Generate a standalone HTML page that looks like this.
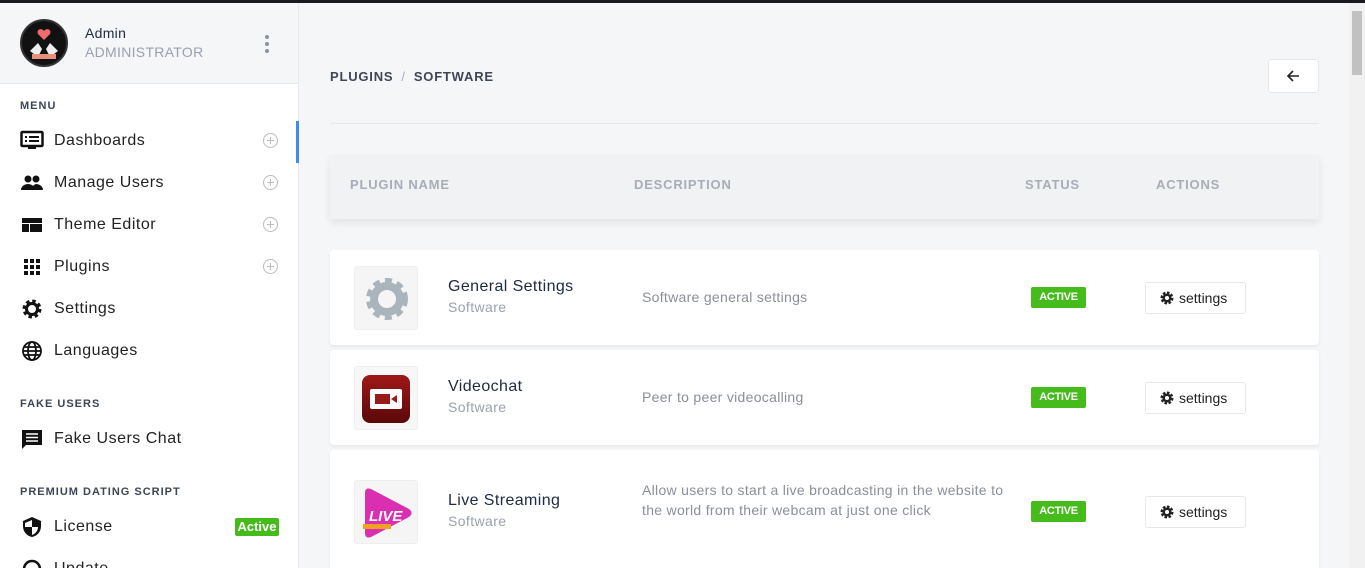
<!DOCTYPE html>
<html><head><style>
*{box-sizing:border-box;margin:0;padding:0}
html{width:1365px;height:568px;overflow:hidden}
body{width:1365px;height:568px;overflow:hidden;font-family:"Liberation Sans",sans-serif;background:#f5f6f8;position:relative}
.top{position:absolute;left:0;top:0;width:1365px;height:3px;background:#1a1a1e}
.side{position:absolute;left:0;top:3px;width:299px;height:565px;background:#fff;border-right:1px solid #e8e9ed;overflow:hidden}
.prof{height:81px;background:#f5f6f8;border-bottom:1px solid #e6e7eb;position:relative}
.av{position:absolute;left:20px;top:16px;width:48px;height:48px;border-radius:50%;background:#111;border:2px solid #333}
.name{position:absolute;left:85px;top:22px;font-size:14px;color:#1d2a44;letter-spacing:.3px}
.role{position:absolute;left:85px;top:41px;font-size:14px;color:#9aa1ae;letter-spacing:.3px}
.dots{position:absolute;left:265px;top:32px;width:4px}
.dots i{display:block;width:4px;height:4px;border-radius:50%;background:#8a92a2;margin-bottom:3px}
.sec{position:absolute;left:20px;font-size:11px;font-weight:bold;letter-spacing:1px;color:#3d4656}
.it{position:absolute;left:20px;width:260px;height:24px;font-size:16px;color:#222;line-height:24px;letter-spacing:.5px}
.it svg{position:absolute;left:0;top:1px}
.it span{position:absolute;left:34px}
.plus{position:absolute;right:2px;top:4px;width:15px;height:15px;border:1.5px solid #bbb;border-radius:50%}
.plus:before{content:"";position:absolute;left:2.5px;top:5.5px;width:7px;height:1.5px;background:#bbb}
.plus:after{content:"";position:absolute;left:5.5px;top:2.5px;width:1.5px;height:7px;background:#bbb}
.ind{position:absolute;left:296px;top:121px;width:3px;height:42px;background:#3d8bf2}
.bc{position:absolute;left:330px;top:69px;font-size:13px;font-weight:bold;color:#3d4656;letter-spacing:.8px}
.bc b{color:#aab;font-weight:normal;margin:0 8px}
.back{position:absolute;left:1268px;top:59px;width:51px;height:34px;background:#fff;border:1px solid #e6e7eb;border-radius:3px}
.hr{position:absolute;left:330px;top:123px;width:989px;height:1px;background:#e6e7eb}
.th{position:absolute;left:330px;top:155px;width:989px;height:64px;background:#f1f2f4;box-shadow:0 4px 8px rgba(0,0,0,.08);font-size:13px;font-weight:bold;color:#a7adb8;letter-spacing:.8px}
.th span{position:absolute;top:22px}
.row{position:absolute;left:330px;width:989px;background:#fff;border-radius:4px;box-shadow:0 2px 3px rgba(0,0,0,.06)}
.ic{position:absolute;left:24px;width:64px;height:64px;border:1px solid #eee;border-radius:3px;background:#f5f5f5;overflow:hidden}
.t1{position:absolute;left:118px;font-size:16px;color:#1d2a44;letter-spacing:.4px}
.t2{position:absolute;left:118px;font-size:14px;color:#9aa1ae;letter-spacing:.4px}
.ds{position:absolute;left:312px;width:365px;font-size:14px;color:#8a8f98;line-height:20px;letter-spacing:.3px}
.act{position:absolute;left:701px;width:55px;height:21px;background:#45bb1c;border-radius:2px;color:#fff;font-size:11px;font-weight:bold;text-align:center;line-height:21px;letter-spacing:-.3px}
.btn{position:absolute;left:815px;width:101px;height:32px;border:1px solid #e6e7eb;border-radius:3px;font-size:14px;color:#222;line-height:30px;padding-left:33px}
.btn svg{position:absolute;left:14px;top:8px}
.sb{position:absolute;left:1349px;top:3px;width:16px;height:565px;background:#f1f1f1}
.sb i{position:absolute;left:3px;top:8px;width:10px;height:64px;background:#c1c1c1}
</style></head><body>
<div class="top"></div>
<div class="side">
 <div class="prof"><div class="av"><svg width="44" height="44" viewBox="0 0 44 44"><path d="M22 10c-3-4-8-1-6 3l6 6 6-6c2-4-3-7-6-3z" fill="#f06b6b"/><path d="M8 30l8-8 4 6-4 8zM36 30l-8-8-4 6 4 8z" fill="#eee"/><rect x="10" y="33" width="24" height="5" fill="#e8907a"/></svg></div>
 <div class="name">Admin</div><div class="role">ADMINISTRATOR</div>
 <div class="dots"><i></i><i></i><i></i></div></div>
 <div class="sec" style="top:97px">MENU</div>
 <div class="it" style="top:126px"><svg width="24" height="22" viewBox="0 0 24 22"><rect x="1.5" y="2" width="21" height="14" rx="1" fill="none" stroke="#111" stroke-width="2.5"/><rect x="8" y="16" width="8" height="3" fill="#111"/><rect x="5" y="6" width="2" height="2" fill="#111"/><rect x="9" y="6" width="10" height="2" fill="#111"/><rect x="5" y="10" width="2" height="2" fill="#111"/><rect x="9" y="10" width="10" height="2" fill="#111"/></svg><span>Dashboards</span><div class="plus"></div></div>
 <div class="it" style="top:168px"><svg width="24" height="22" viewBox="0 0 24 22"><circle cx="8" cy="7" r="3.5" fill="#111"/><circle cx="16" cy="7" r="3.5" fill="#111"/><path d="M1 18c0-4 4-6 7-6s7 2 7 6zM12 18c0-3 1-5 4-6 3 0 7 2 7 6z" fill="#111"/></svg><span>Manage Users</span><div class="plus"></div></div>
 <div class="it" style="top:210px"><svg width="24" height="22" viewBox="0 0 24 22"><rect x="2" y="4" width="20" height="5" fill="#111"/><rect x="2" y="10" width="7" height="8" fill="#111"/><rect x="10" y="10" width="12" height="8" fill="#111"/></svg><span>Theme Editor</span><div class="plus"></div></div>
 <div class="it" style="top:252px"><svg width="24" height="22" viewBox="0 0 24 22"><g fill="#111"><rect x="4" y="3" width="4" height="4"/><rect x="10" y="3" width="4" height="4"/><rect x="16" y="3" width="4" height="4"/><rect x="4" y="9" width="4" height="4"/><rect x="10" y="9" width="4" height="4"/><rect x="16" y="9" width="4" height="4"/><rect x="4" y="15" width="4" height="4"/><rect x="10" y="15" width="4" height="4"/><rect x="16" y="15" width="4" height="4"/></g></svg><span>Plugins</span><div class="plus"></div></div>
 <div class="it" style="top:294px"><svg width="24" height="22" viewBox="0 0 24 22"><circle cx="12" cy="11" r="7" fill="none" stroke="#111" stroke-width="5" stroke-dasharray="3 2.5"/><circle cx="12" cy="11" r="5.5" fill="none" stroke="#111" stroke-width="3"/></svg><span>Settings</span></div>
 <div class="it" style="top:336px"><svg width="24" height="22" viewBox="0 0 24 22"><g fill="none" stroke="#111" stroke-width="1.8"><circle cx="12" cy="11" r="9"/><ellipse cx="12" cy="11" rx="4" ry="9"/><path d="M3 11h18M4 7h16M4 15h16"/></g></svg><span>Languages</span></div>
 <div class="sec" style="top:395px">FAKE USERS</div>
 <div class="it" style="top:424px"><svg width="24" height="22" viewBox="0 0 24 22"><path d="M2 2h20v15H6l-4 4z" fill="#111"/><path d="M6 6h12M6 9.5h12M6 13h12" stroke="#fff" stroke-width="1.5"/></svg><span>Fake Users Chat</span></div>
 <div class="sec" style="top:483px">PREMIUM DATING SCRIPT</div>
 <div class="it" style="top:512px"><svg width="24" height="22" viewBox="0 0 24 22"><path d="M12 1l9 4v5c0 6-4 10-9 11-5-1-9-5-9-11V5z" fill="#111"/><path d="M12 4v7h6c0 4-3 7-6 8zM12 11H5V7l7-3" fill="#fff"/></svg><span>License</span><div style="position:absolute;left:215px;top:3px;width:44px;height:18px;background:#45bb1c;border-radius:2px;color:#fff;font-size:13px;font-weight:bold;line-height:18px;text-align:center;letter-spacing:0">Active</div></div>
 <div class="it" style="top:554px"><svg width="24" height="22" viewBox="0 0 24 22"><circle cx="12" cy="11" r="8" fill="none" stroke="#111" stroke-width="2.5"/></svg><span>Update</span></div>
</div>
<div class="ind"></div>
<div class="bc">PLUGINS<b>/</b>SOFTWARE</div>
<div class="back"><svg style="position:absolute;left:17px;top:9px" width="14" height="14" viewBox="0 0 14 14"><path d="M13 7H2M7 2L2 7l5 5" fill="none" stroke="#222" stroke-width="1.6"/></svg></div>
<div class="hr"></div>
<div class="th"><span style="left:20px">PLUGIN NAME</span><span style="left:304px">DESCRIPTION</span><span style="left:695px">STATUS</span><span style="left:826px">ACTIONS</span></div>

<div class="row" style="top:250px;height:95px">
 <div class="ic" style="top:16px"><svg width="64" height="64" viewBox="0 0 64 64"><circle cx="32" cy="32" r="16" fill="none" stroke="#aab4bc" stroke-width="10" stroke-dasharray="6 4.5"/><circle cx="32" cy="32" r="13" fill="none" stroke="#aab4bc" stroke-width="8"/></svg></div>
 <div class="t1" style="top:28px">General Settings</div><div class="t2" style="top:49px">Software</div>
 <div class="ds" style="top:37px">Software general settings</div>
 <div class="act" style="top:37px">ACTIVE</div>
 <div class="btn" style="top:32px"><svg width="14" height="14" viewBox="0 0 14 14"><circle cx="7" cy="7" r="4.5" fill="none" stroke="#222" stroke-width="4" stroke-dasharray="2.2 1.3"/><circle cx="7" cy="7" r="3.3" fill="none" stroke="#222" stroke-width="2.5"/></svg>settings</div>
</div>
<div class="row" style="top:350px;height:95px">
 <div class="ic" style="top:16px;background:#f7f7f7"><div style="position:absolute;left:7px;top:8px;width:48px;height:48px;border-radius:8px;background:linear-gradient(#a01818,#5a0808)"><div style="position:absolute;left:8px;top:14px;width:32px;height:20px;background:#fff;border-radius:2px"><div style="position:absolute;left:5px;top:5px;width:15px;height:10px;background:#9a1a1a"></div><div style="position:absolute;left:21px;top:6px;width:0;height:0;border-top:4px solid transparent;border-bottom:4px solid transparent;border-right:6px solid #9a1a1a"></div></div></div></div>
 <div class="t1" style="top:28px">Videochat</div><div class="t2" style="top:49px">Software</div>
 <div class="ds" style="top:37px">Peer to peer videocalling</div>
 <div class="act" style="top:37px">ACTIVE</div>
 <div class="btn" style="top:32px"><svg width="14" height="14" viewBox="0 0 14 14"><circle cx="7" cy="7" r="4.5" fill="none" stroke="#222" stroke-width="4" stroke-dasharray="2.2 1.3"/><circle cx="7" cy="7" r="3.3" fill="none" stroke="#222" stroke-width="2.5"/></svg>settings</div>
</div>
<div class="row" style="top:450px;height:118px;border-radius:4px 4px 0 0">
 <div class="ic" style="top:30px"><svg width="64" height="64" viewBox="0 0 64 64"><path d="M10 12q0-6 6-4l38 20q5 4 0 8l-38 20q-6 2-6-4z" fill="#d92fb0"/><text x="14" y="40" font-family="Liberation Sans" font-style="italic" font-weight="bold" font-size="15" fill="#fff">LIVE</text><rect x="8" y="43" width="28" height="5" fill="#f2a024"/></svg></div>
 <div class="t1" style="top:42px">Live Streaming</div><div class="t2" style="top:63px">Software</div>
 <div class="ds" style="top:30px">Allow users to start a live broadcasting in the website to the world from their webcam at just one click</div>
 <div class="act" style="top:51px">ACTIVE</div>
 <div class="btn" style="top:46px"><svg width="14" height="14" viewBox="0 0 14 14"><circle cx="7" cy="7" r="4.5" fill="none" stroke="#222" stroke-width="4" stroke-dasharray="2.2 1.3"/><circle cx="7" cy="7" r="3.3" fill="none" stroke="#222" stroke-width="2.5"/></svg>settings</div>
</div>
<div class="sb"><i></i></div>
</body></html>
